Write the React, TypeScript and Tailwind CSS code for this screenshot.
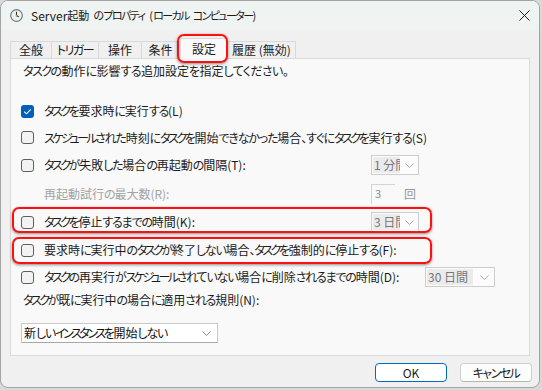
import React from "react";

type Mode = "tight" | "loose" | "title";

function J({ t, mode = "tight" }: { t: string; mode?: Mode }) {
  const parts: React.ReactNode[] = [];
  const re = /([\u30A0-\u30FF]+)|([\u3040-\u309F\u3001\u3002]+)|([^\u3040-\u30FF\u3001\u3002]+)/g;
  let m: RegExpExecArray | null;
  let i = 0;
  const kata = mode === "loose" ? "tracking-[-1.5px]" : mode === "title" ? "tracking-[-1.6px]" : "tracking-[-2.5px]";
  const hira = mode === "loose" ? "tracking-[-0.6px]" : mode === "title" ? "tracking-[-0.6px]" : "tracking-[-1.2px]";
  while ((m = re.exec(t))) {
    if (m[1])
      parts.push(
        <span key={i++} className={kata}>
          {m[1]}
        </span>
      );
    else if (m[2])
      parts.push(
        <span key={i++} className={hira}>
          {m[2]}
        </span>
      );
    else parts.push(<React.Fragment key={i++}>{m[3]}</React.Fragment>);
  }
  return <>{parts}</>;
}

function Box({ checked }: { checked?: boolean }) {
  if (checked) {
    return (
      <span className="w-[13px] h-[13px] rounded-[3px] bg-[#005fb8] flex items-center justify-center shrink-0 -ml-[1px]">
        <svg width="9" height="7" viewBox="0 0 9 7">
          <path d="M1.2 3.6 L3.5 5.8 L7.8 1.3" stroke="white" strokeWidth="1.1" fill="none" />
        </svg>
      </span>
    );
  }
  return <span className="w-[13px] h-[13px] rounded-[3px] border border-[#5f5f5f] bg-[#f3f3f3] shrink-0 -ml-[1px]" />;
}

function Chevron({ color = "#a8a8a8" }: { color?: string }) {
  return (
    <svg width="9" height="5" viewBox="0 0 9 5">
      <path d="M0.5 0.5 L4.5 4.5 L8.5 0.5" stroke={color} strokeWidth="1" fill="none" />
    </svg>
  );
}

function RedBox({ className }: { className: string }) {
  return (
    <div
      className={
        "absolute border-2 border-[#ff1010] rounded-[7px] shadow-[0_1px_3px_rgba(0,0,0,0.45)] pointer-events-none " +
        className
      }
    />
  );
}

export default function App() {
  return (
    <div className="w-[542px] h-[390px] bg-[#d9d9d9] font-['Noto_Sans_CJK_JP',sans-serif] [font-feature-settings:'palt'] text-[12px] text-[#1b1b1b] leading-none">
      <div className="w-[540px] h-[388px] flex flex-col border border-[#a3a3a3] rounded-[8px] overflow-hidden bg-[#f0f0f0]">
        {/* Title bar */}
        <div className="h-[29px] shrink-0 flex items-center bg-[#eff3f1] pl-[9px] pr-[7px]">
          <svg width="13" height="13" viewBox="0 0 13 13" className="shrink-0">
            <circle cx="6.5" cy="6.5" r="5.8" fill="#eef1f4" stroke="#6f7d8c" strokeWidth="1.2" />
            <path d="M6.5 2.8 V6.6 L8.8 7.8" stroke="#2f2f2f" strokeWidth="1.1" fill="none" />
            <circle cx="6.5" cy="6.6" r="0.9" fill="#d4a020" />
          </svg>
          <span className="ml-[8px] text-[12px] text-[#1a1a1a] whitespace-nowrap flex items-center">
            <span className="text-[12px]">Server</span>
            <span className="text-[11px]">
              <J t="起動" mode="title" />
            </span>
            <span className="w-[4px]" />
            <span className="text-[11px]">
              <J t="のプロパティ" mode="title" />
            </span>
            <span className="w-[5px]" />
            <span className="text-[11px]">
              <J t="(ローカル" mode="title" />
            </span>
            <span className="w-[4px]" />
            <span className="text-[11px]">
              <J t="コンピューター)" mode="title" />
            </span>
          </span>
          <svg width="11" height="11" viewBox="0 0 11 11" className="ml-auto mr-[2px]">
            <path d="M0.5 0.5 L10.5 10.5 M10.5 0.5 L0.5 10.5" stroke="#1a1a1a" strokeWidth="1" />
          </svg>
        </div>

        {/* Body */}
        <div className="flex-1 flex flex-col pl-[9px] pr-[9px]">
          {/* Tabs */}
          <div className="h-[28px] flex items-end relative z-10">
            <div className="h-[17px] w-[42px] flex items-center justify-center border border-[#d9d9d9] border-b-0 bg-[#f0f0f0]">全般</div>
            <div className="h-[17px] w-[47px] flex items-center justify-center border border-l-0 border-[#d9d9d9] border-b-0 bg-[#f0f0f0]">
              <J t="トリガー" mode="loose" />
            </div>
            <div className="h-[17px] w-[43px] flex items-center justify-center border border-l-0 border-[#d9d9d9] border-b-0 bg-[#f0f0f0]">操作</div>
            <div className="h-[17px] w-[38px] flex items-center justify-center border border-l-0 border-[#d9d9d9] border-b-0 bg-[#f0f0f0]">条件</div>
            <div className="relative h-[21px] w-[48px] -mb-px flex items-center justify-center border border-[#d9d9d9] border-b-0 bg-[#f9f9f9]">
              設定
              <RedBox className="left-[-4px] top-[-5px] w-[51px] h-[29px]" />
            </div>
            <div className="h-[17px] w-[68px] flex items-center justify-center border border-l-0 border-[#d9d9d9] border-b-0 bg-[#f0f0f0]">履歴 (無効)</div>
          </div>

          {/* Panel */}
          <div className="h-[298px] border border-[#dadada] bg-[#f9f9f9] pl-[11px] flex flex-col">
            <div className="h-[24px] flex items-center pl-[1px] whitespace-nowrap">
              <J t="タスクの動作に影響する追加設定を指定してください。" mode="loose" />
            </div>
            <div className="h-[15px]" />

            <div className="h-[26px] flex items-center">
              <Box checked />
              <span className="ml-[10px] whitespace-nowrap">
                <J t="タスクを要求時に実行する(L)" />
              </span>
            </div>

            <div className="h-[27px] flex items-center">
              <Box />
              <span className="ml-[10px] whitespace-nowrap">
                <J t="スケジュールされた時刻にタスクを開始できなかった場合、すぐにタスクを実行する(S)" />
              </span>
            </div>

            <div className="h-[28px] flex items-center">
              <Box />
              <span className="ml-[10px] w-[327px] shrink-0 whitespace-nowrap">
                <J t="タスクが失敗した場合の再起動の間隔(T):" />
              </span>
              <div className="w-[48px] h-[20px] border border-[#cdcdcd] bg-[#fcfcfc] flex items-center">
                <span className="ml-[1px] w-[27px] h-[16px] bg-[#ebebeb] text-[#777777] overflow-hidden whitespace-nowrap flex items-center pl-[1px]">1 分間</span>
                <span className="ml-auto mr-[4px] flex">
                  <Chevron />
                </span>
              </div>
            </div>

            <div className="h-[29px] flex items-center">
              <span className="pl-[22px] w-[349px] shrink-0 text-[#a3a3a3] whitespace-nowrap">
                <J t="再起動試行の最大数(R):" />
              </span>
              <div className="w-[24px] h-[20px] border-t border-l border-[#d4d4d4] bg-[#f9f9f9] text-[#8c8c8c] text-[11px] pl-[3px] pt-[3px]">3</div>
              <span className="ml-[9px] text-[#9a9a9a]">回</span>
            </div>

            <div className="h-[28px] flex items-center relative">
              <RedBox className="left-[-10px] top-[-1px] w-[420px] h-[26px]" />
              <Box />
              <span className="ml-[10px] w-[327px] shrink-0 whitespace-nowrap">
                <J t="タスクを停止するまでの時間(K):" />
              </span>
              <div className="w-[48px] h-[20px] border border-[#cdcdcd] bg-[#fcfcfc] flex items-center">
                <span className="ml-[1px] w-[27px] h-[16px] bg-[#ebebeb] text-[#777777] overflow-hidden whitespace-nowrap flex items-center pl-[1px]">3 日間</span>
                <span className="ml-auto mr-[4px] flex">
                  <Chevron />
                </span>
              </div>
            </div>

            <div className="h-[28px] flex items-center relative">
              <RedBox className="left-[-10px] top-[1px] w-[420px] h-[27px]" />
              <Box />
              <span className="ml-[10px] whitespace-nowrap">
                <J t="要求時に実行中のタスクが終了しない場合、タスクを強制的に停止する(F):" />
              </span>
            </div>

            <div className="h-[26px] flex items-center">
              <Box />
              <span className="ml-[10px] w-[381px] shrink-0 whitespace-nowrap">
                <J t="タスクの再実行がスケジュールされていない場合に削除されるまでの時間(D):" />
              </span>
              <div className="w-[70px] h-[20px] border border-[#cdcdcd] bg-[#fcfcfc] flex items-center">
                <span className="ml-[1px] w-[46px] h-[16px] bg-[#ebebeb] text-[#777777] overflow-hidden whitespace-nowrap flex items-center pl-[1px]">30 日間</span>
                <span className="ml-auto mr-[5px] flex">
                  <Chevron />
                </span>
              </div>
            </div>

            <div className="h-[20px] flex items-center pl-[1px] whitespace-nowrap">
              <J t="タスクが既に実行中の場合に適用される規則(N):" />
            </div>

            <div className="mt-[13px] -ml-[1px] w-[197px] h-[20px] border border-[#c9c9c9] border-b-[#a8a8a8] bg-white flex items-center pl-[2px] pr-[6px]">
              <span className="text-[#111111] whitespace-nowrap">
                <J t="新しいインスタンスを開始しない" />
              </span>
              <span className="ml-auto flex">
                <Chevron color="#8a8a8a" />
              </span>
            </div>
          </div>

          {/* Footer */}
          <div className="flex-1 flex justify-end items-start pt-[7px] gap-[13px]">
            <button className="w-[72px] h-[19px] rounded-[4px] border border-[#0067c0] bg-white text-[12px] text-[#1a1a1a] flex items-center justify-center">OK</button>
            <button className="w-[72px] h-[19px] rounded-[4px] border border-[#cfcfcf] border-b-[#b5b5b5] bg-[#fdfdfd] text-[12px] text-[#1a1a1a] flex items-center justify-center -mr-[2px]">
              <J t="キャンセル" mode="loose" />
            </button>
          </div>
        </div>
      </div>
    </div>
  );
}
